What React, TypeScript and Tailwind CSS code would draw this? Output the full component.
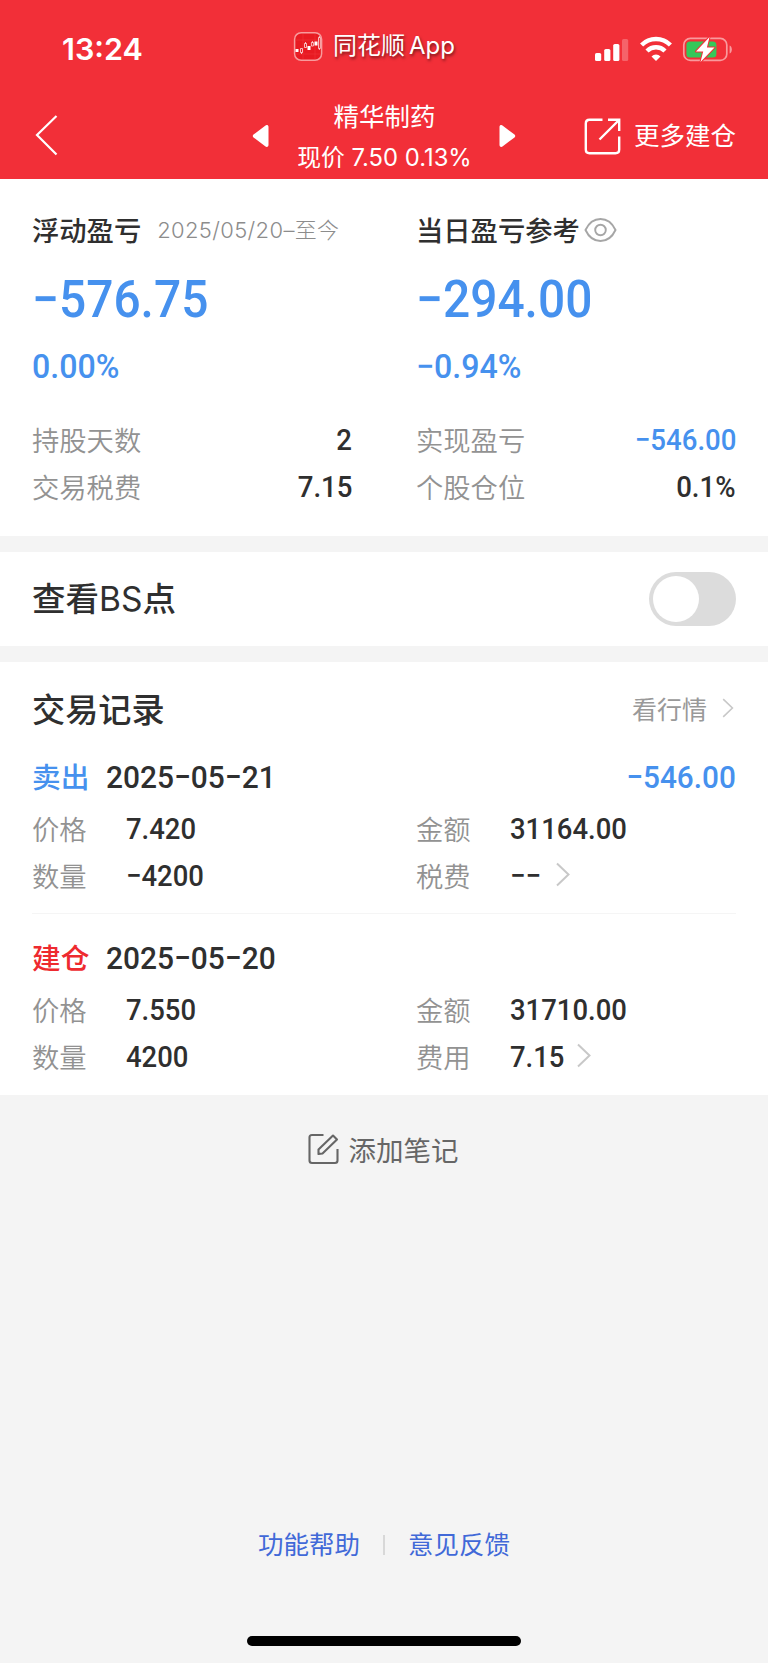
import type { ReactNode } from 'react';

// narrow figures for prices, dates and amounts
const NUM = 'inline-block font-[Roboto,sans-serif] font-medium';

function StatusBar() {
  return (
    <div className="grid h-[90px] grid-cols-[293px_1fr_173px] items-start text-white">
      <div className="pt-[31px] pl-[62px] font-[Inter,sans-serif] text-[30.5px] leading-[36px] font-semibold">13:24</div>

      <div className="flex items-center gap-[10px] pt-[28px]">
        <svg width="30" height="32" viewBox="0 0 30 32" fill="none">
          <rect x="1.6" y="2.7" width="27" height="27.6" rx="6.5" fill="#e81a22" stroke="#f89a9c" strokeWidth="1.5" />
          <path d="M2.5 10h25M2.5 24h25M10 4v25M22 4v25" stroke="#f03a3e" strokeWidth=".5" />
          <path d="M2.5 19h3v3h-3zM14.500 16h3v4h-3zM21.500 11.500h3v4h-3z" fill="#fff" />
          <path d="M7.500 18.500h2v4h-2zM11.500 13.500h2v4h-2zM18.400 12.500h2v3.500h-2zM25.500 7.500h1.800v11h-1.800zM8.500 22.500v1.500M12.500 12v1.500M19.400 11v1.500M26.400 6v1.500M26.400 18.500V20" stroke="#fff" strokeWidth=".7" />
        </svg>
        <span className="font-[Inter,'Noto_Sans_CJK_SC',sans-serif] text-[24px] leading-[35px] whitespace-nowrap [text-shadow:1px_2px_3px_rgba(0,0,0,.5)]">
          同花顺<span className="ml-[4px]">App</span>
        </span>
      </div>

      <div className="flex items-center gap-[10px] pt-[35px]">
        <svg className="-ml-px" width="36" height="26" viewBox="0 0 36 26" fill="#fff">
          <rect x="1" y="17" width="6.2" height="8" rx="1.6" />
          <rect x="10.2" y="13" width="6.2" height="12" rx="1.6" />
          <rect x="19.2" y="8" width="6.2" height="17" rx="1.6" />
          <rect x="28" y="3" width="6.2" height="22" rx="1.6" fillOpacity=".25" />
        </svg>
        <svg width="32" height="26" viewBox="0 0 32 26" fill="none" stroke="#fff" strokeWidth="4.4">
          <path d="M1.6 9a20.3 20.3 0 0 1 28.8 0" />
          <path d="M7 15a12.7 12.7 0 0 1 18 0" />
          <path d="M16 25l-4.5-4.6a6.4 6.4 0 0 1 9 0z" fill="#fff" stroke="none" />
        </svg>
        <svg width="52" height="28" viewBox="0 0 52 28" fill="none">
          <rect x="1.8" y="3.4" width="43" height="22" rx="6.5" stroke="#f99a9d" strokeWidth="1.7" />
          <path d="M47.6 10.5c3 1 3 7 0 8z" fill="#f99a9d" />
          <rect x="4.4" y="6.5" width="30" height="16" rx="3.5" fill="#35c759" />
          <path d="M27.5 2L14 16.5h7.2L18.5 27 32.5 12.5h-7.6z" fill="#fff" stroke="#f22f38" strokeWidth="2" strokeLinejoin="round" paintOrder="stroke" />
        </svg>
      </div>
    </div>
  );
}

function NavBar() {
  return (
    <div className="flex h-[89px] items-center justify-between pr-[32px] pl-[34px] font-[Inter,'Noto_Sans_CJK_SC',sans-serif] text-white">
      <svg className="mt-px mr-[193px]" width="25" height="42" viewBox="0 0 25 42" fill="none" stroke="#fff" strokeWidth="2.2">
        <path d="M22.5 2L3 21l19.500 19.500" />
      </svg>
      <svg className="mt-[3px]" width="18" height="24" viewBox="0 0 18 24" fill="#fff">
        <path d="M16.5 3v18c0 2-2 2.4-3.3 1.3L1.5 13.4c-1-.8-1-2 0-2.8L13.2 1.7C14.5.6 16.5 1 16.5 3z" />
      </svg>
      <div className="flex w-[229px] flex-col items-center">
        <div className="h-[42px] text-[25.5px] leading-[47px]">精华制药</div>
        <div className="h-[42px] text-[23.8px] leading-[46px] whitespace-nowrap">现价 7.50 0.13%</div>
      </div>
      <svg className="mt-[3px] -ml-px" width="18" height="24" viewBox="0 0 18 24" fill="#fff">
        <path d="M1.5 3v18c0 2 2 2.4 3.3 1.3l11.7-8.9c1-.8 1-2 0-2.8L4.8 1.7C3.5.6 1.5 1 1.5 3z" />
      </svg>
      <div className="ml-[68px] flex items-center gap-[13px]">
        <svg className="mt-[3px]" width="37" height="37" viewBox="0 0 37 37" fill="none" stroke="#fff" strokeWidth="2.4">
          <path d="M18.5 1.8H5.5Q1.8 1.8 1.8 5.5v26Q1.8 35.2 5.5 35.200h26Q35.200 35.200 35.200 31.500V18.500" />
          <path d="M24 1.8h11.200v11.200M35 2L15.500 21.500" />
        </svg>
        <span className="mt-[3px] text-[25.5px] leading-[40px] whitespace-nowrap">更多建仓</span>
      </div>
    </div>
  );
}

function Chevron({ width, height }: { width: number; height: number }) {
  return (
    <svg width={width} height={height} viewBox="0 0 14 25" fill="none" stroke="#c8c8c8" strokeWidth="2">
      <path d="M1 1.5l11.5 11L1 23.5" />
    </svg>
  );
}

function SummaryRow({ label, value, blue }: { label: string; value: string; blue?: boolean }) {
  return (
    <div className="flex h-[47px] items-center justify-between">
      <span className="mb-px text-[27.3px] leading-[44px] font-[350] text-[#929292]">{label}</span>
      <span className={`${NUM} origin-right scale-x-[.92] text-[30px] leading-[47px] ${blue ? 'text-[#4691ee]' : 'text-[#2f2f2f]'}`}>{value}</span>
    </div>
  );
}

function Summary() {
  return (
    <section className="grid h-[357px] grid-cols-[320px_320px] gap-x-[64px] bg-white pt-[27px] pl-[32px]">
      <div>
        <div className="flex h-[46px] items-center">
          <span className="text-[27.3px] leading-[46px] font-medium">浮动盈亏</span>
          <span className="mt-px ml-[16px] font-[Inter,'Noto_Sans_CJK_SC',sans-serif] text-[22px] leading-[46px] font-light tracking-[.35px] text-[#8c8c8c]">2025/05/20–至今</span>
        </div>
        <div className="h-[91px] text-[#4691ee]">
          <span className={`${NUM} origin-left scale-x-[.93] text-[51.5px] leading-[96px]`}>−576.75</span>
        </div>
        <div className="h-[46px] text-[#4691ee]">
          <span className={`${NUM} origin-left scale-x-[.945] text-[34px] leading-[46px]`}>0.00%</span>
        </div>
        <div className="pt-[27px]">
          <SummaryRow label="持股天数" value="2" />
          <SummaryRow label="交易税费" value="7.15" />
        </div>
      </div>
      <div>
        <div className="flex h-[46px] items-center">
          <span className="text-[27.3px] leading-[46px] font-medium">当日盈亏参考</span>
          <svg className="mt-px ml-[4px]" width="33" height="26" viewBox="0 0 33 26" fill="none" stroke="#a6a6a6" strokeWidth="1.9">
            <path d="M1.5 13C5 5.500 10.500 2 16.500 2S28 5.500 31.500 13C28 20.500 22.500 24 16.500 24S5 20.500 1.500 13z" />
            <circle cx="16.5" cy="13" r="5.3" />
          </svg>
        </div>
        <div className="h-[91px] text-[#4691ee]">
          <span className={`${NUM} origin-left scale-x-[.93] text-[51.5px] leading-[96px]`}>−294.00</span>
        </div>
        <div className="h-[46px] text-[#4691ee]">
          <span className={`${NUM} origin-left scale-x-[.945] text-[34px] leading-[46px]`}>−0.94%</span>
        </div>
        <div className="pt-[27px]">
          <SummaryRow label="实现盈亏" value="−546.00" blue />
          <SummaryRow label="个股仓位" value="0.1%" />
        </div>
      </div>
    </section>
  );
}

function BsSwitch() {
  return (
    <section className="mt-[16px] flex h-[94px] items-center justify-between bg-white pr-[32px] pl-[32px]">
      <span className="font-[Inter,'Noto_Sans_CJK_SC',sans-serif] text-[33.5px] leading-[60px] font-medium">
        查看<span className="font-normal">BS</span>点
      </span>
      <div className="flex h-[54px] w-[87px] items-center rounded-full bg-[#dcdcdc] px-[4px]">
        <div className="size-[46px] rounded-full bg-white" />
      </div>
    </section>
  );
}

function Field({ label, value, children }: { label: string; value: string; children?: ReactNode }) {
  return (
    <div className="flex h-[47px] items-center">
      <span className="mb-px w-[94px] text-[27.3px] leading-[44px] font-[350] text-[#929292]">{label}</span>
      <span className={`${NUM} min-w-[39px] origin-left scale-x-[.915] text-[30px] leading-[47px]`}>{value}</span>
      {children}
    </div>
  );
}

type Trade = {
  kind: string;
  sell: boolean;
  date: string;
  profit?: string;
  price: string;
  amount: string;
  qty: string;
  feeLabel: string;
  fee: string;
};

const trades: Trade[] = [
  { kind: '卖出', sell: true, date: '2025−05−21', profit: '−546.00', price: '7.420', amount: '31164.00', qty: '−4200', feeLabel: '税费', fee: '−−' },
  { kind: '建仓', sell: false, date: '2025−05−20', price: '7.550', amount: '31710.00', qty: '4200', feeLabel: '费用', fee: '7.15' },
];

function TradeItem({ trade }: { trade: Trade }) {
  return (
    <div className="h-[181px] border-[#f5f5f5] pt-[20px] not-last:border-b">
      <div className="flex h-[49px] items-center">
        <span className={`mb-[3px] text-[28.7px] leading-[46px] font-medium ${trade.sell ? 'text-[#4691ee]' : 'text-[#ee2a2f]'}`}>{trade.kind}</span>
        <span className={`${NUM} ml-[17px] origin-left scale-x-[.935] text-[32px] leading-[49px]`}>{trade.date}</span>
        {trade.profit && <span className={`${NUM} ml-auto origin-right scale-x-[.93] text-[32px] leading-[49px] text-[#4691ee]`}>{trade.profit}</span>}
      </div>
      <div className="grid grid-cols-[384px_1fr] pt-[3px]">
        <Field label="价格" value={trade.price} />
        <Field label="金额" value={trade.amount} />
        <Field label="数量" value={trade.qty} />
        <Field label={trade.feeLabel} value={trade.fee}>
          <span className="mb-[2px] ml-[7px]">
            <Chevron width={14} height={25} />
          </span>
        </Field>
      </div>
    </div>
  );
}

function Records() {
  return (
    <section className="mt-[16px] h-[433px] bg-white pr-[32px] pl-[32px]">
      <div className="flex h-[71px] items-center justify-between pr-[2px] pt-[21px]">
        <h2 className="text-[33.2px] leading-[48px] font-medium">交易记录</h2>
        <a className="flex items-center gap-[15px] text-[25px] leading-[49px] text-[#999]">
          看行情
          <Chevron width={12} height={20} />
        </a>
      </div>
      {trades.map((t) => (
        <TradeItem key={t.date} trade={t} />
      ))}
    </section>
  );
}

export default function App() {
  return (
    <div className="flex h-[1663px] w-[768px] flex-col overflow-hidden bg-[#f4f4f4] font-['Noto_Sans_CJK_SC',sans-serif] text-[#2f2f2f]">
      <header className="h-[179px] bg-[#f22f38]">
        <StatusBar />
        <NavBar />
      </header>

      <Summary />
      <BsSwitch />
      <Records />

      <button className="mt-[30px] flex h-[48px] items-center justify-center gap-[10px] pr-[2px] text-[27.5px] leading-[47px] text-[#666]">
        <svg width="31" height="32" viewBox="0 0 31 32" fill="none" stroke="#666" strokeWidth="2.1">
          <path d="M15.5 2H4Q1.5 2 1.5 4.5v23Q1.5 30 4 30h23Q29.5 30 29.5 27.5V16" />
          <path d="M10.5 21v-4.5L25 2.5l4 4L14.5 20.5z" strokeLinejoin="round" />
        </svg>
        添加笔记
      </button>

      <footer className="mt-auto flex flex-col items-center pb-[17px]">
        <div className="flex h-[46px] items-center text-[25.5px] leading-[46px] text-[#4169d8]">
          <a>功能帮助</a>
          <span className="mx-[23px] mt-[3px] h-[20px] w-[2px] bg-[#d8d8d8]" />
          <a>意见反馈</a>
        </div>
        <div className="mt-[70px] h-[10px] w-[274px] rounded-full bg-black" />
      </footer>
    </div>
  );
}
